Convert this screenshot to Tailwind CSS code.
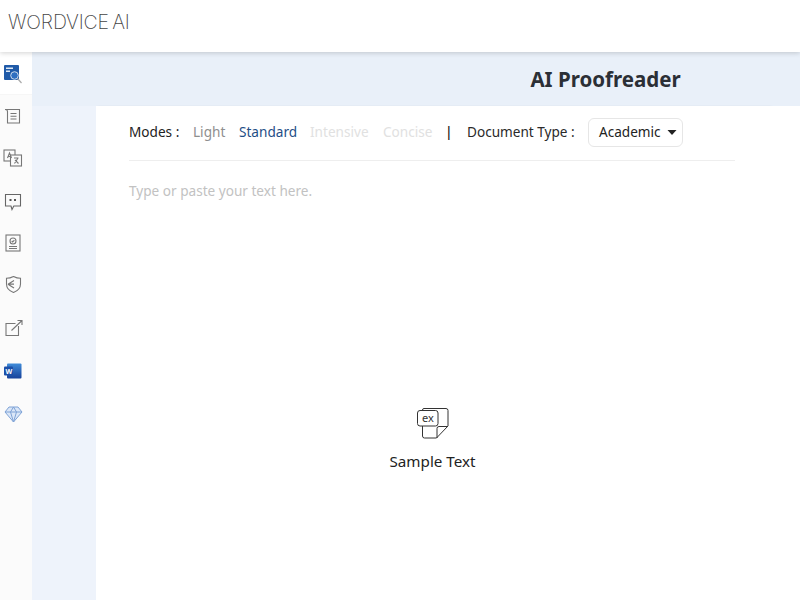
<!DOCTYPE html>
<html><head><meta charset="utf-8">
<script src="https://cdn.jsdelivr.net/npm/@tailwindcss/browser@4"></script>
</head>
<body class="w-[800px] h-[600px] overflow-hidden bg-white font-['Noto_Sans',sans-serif]">
<header class="relative z-10 h-[52px] bg-white shadow-[0_1px_5px_rgba(0,0,0,0.18)] flex items-center pl-[8px]">
  <span class="font-['Inter',sans-serif] font-extralight text-[#444] text-[19.5px] tracking-[-0.15px] [word-spacing:-2px] leading-none pb-[6px]">WORDVICE AI</span>
</header>
<div class="flex h-[548px]">
  <aside class="w-[32px] shrink-0 bg-[#fbfbfb] flex flex-col">
    <div class="h-[43px] bg-white flex items-start pl-[4px] pt-[13px] border-b border-[#f6f6f6]">
      <svg width="18" height="19" viewBox="0 0 18 19"><rect x="0" y="0" width="15" height="15" rx="1" fill="#1f5aa8"/><rect x="2" y="2.500" width="7" height="1.500" fill="#dfe9f5"/><rect x="2" y="5.500" width="4" height="1.500" fill="#dfe9f5"/><circle cx="10.500" cy="10.500" r="3.800" fill="#2f6fc0" stroke="#cfdcec" stroke-width="1"/><path d="M13.500 13.500L17.500 18" stroke="#aaa" stroke-width="1.200"/></svg>
    </div>
    <div class="flex flex-col items-center pr-[6px]">
      <svg width="18" height="18" viewBox="0 0 18 18" class="mt-[12px] ml-[-1px]" fill="none" stroke="#777" stroke-width="1.100"><path d="M1 2.500H15.500V16H3.500V4.500C3.500 3.300 2.200 2.500 1 2.500Z"/><path d="M6.500 6.500H12.500M6.500 9.300H12.500M6.500 12H12.500"/></svg>
      <svg width="20" height="18" viewBox="0 0 20 18" class="mt-[24px]" fill="none" stroke="#777" stroke-width="1.100"><rect x="1" y="1" width="11" height="11" fill="#fbfbfb"/><rect x="7.500" y="6" width="11" height="11" fill="#fbfbfb"/><path d="M4.500 9L6.500 4L8.500 9M5 7.500H8"/><path d="M11 9H15.500M15 9L11.500 14.500M12 11L15.500 14.500"/></svg>
      <svg width="18" height="18" viewBox="0 0 18 18" class="mt-[26px]" fill="none" stroke="#666" stroke-width="1.100"><path d="M1.500 1.500H16.500V13H9.800L8 16.500L7 13H1.500Z"/><path d="M5.500 6H7.500V8H5.500ZM10 6H12V8H10Z" fill="#555" stroke="none"/></svg>
      <svg width="16" height="18" viewBox="0 0 16 18" class="mt-[23px]" fill="none" stroke="#777" stroke-width="1.100"><rect x="1" y="1" width="14" height="16"/><circle cx="8" cy="7" r="3"/><path d="M6.700 7L7.700 8L9.400 6.200M4 12.500H12M4 14.500H12"/></svg>
      <svg width="17" height="19" viewBox="0 0 17 19" class="mt-[23px]" fill="none" stroke="#777" stroke-width="1.100"><path d="M8.500 1.500C11 2.800 13.500 3.300 15.500 3.300V9C15.500 13 12.500 16 8.500 17.500C4.500 16 1.500 13 1.500 9V3.300C3.500 3.300 6 2.800 8.500 1.500Z"/><path d="M3 9.200H9M3 9.200L9 5.500M3 9.200L9 13" stroke-width="1.200"/></svg>
      <svg width="18" height="18" viewBox="0 0 18 18" class="mt-[25px] ml-[1px]" fill="none" stroke="#777" stroke-width="1.100"><path d="M13.500 7V16.500H1V4.500H10.500"/><path d="M6.500 11.500L17 1.500M12.500 1.500H17V6"/></svg>
      <svg width="18" height="16" viewBox="0 0 18 16" class="mt-[26px] ml-[-1px]"><defs><linearGradient id="w" x1="0" y1="0" x2="0" y2="1"><stop offset="0" stop-color="#3f8bd8"/><stop offset="1" stop-color="#17419a"/></linearGradient></defs><rect x="3" y="0.500" width="14.500" height="15" rx="1" fill="url(#w)"/><rect x="0" y="3.500" width="9" height="9" rx="1" fill="#1c4fa8"/><text x="1.500" y="10.500" font-size="7" font-weight="700" fill="#fff" font-family="Noto Sans">W</text></svg>
      <svg width="19" height="17" viewBox="0 0 19 17" class="mt-[27px]" fill="#dbe7f8" stroke="#7fa3d6" stroke-width="1"><path d="M5 1H14L18 6L9.500 16L1 6Z"/><path d="M1 6H18M6.500 6L9.500 16L12.500 6L9.500 1L6.500 6" fill="none"/></svg>
    </div>
  </aside>
  <main class="flex-1 flex flex-col min-w-0">
    <div class="h-[54px] bg-[#e9f0f9] flex items-center justify-center shrink-0 pl-[379px]">
      <h1 class="font-bold text-[20.5px] leading-none text-[#2b2f36] whitespace-nowrap">AI Proofreader</h1>
    </div>
    <div class="flex-1 flex min-h-0">
      <div class="w-[64px] shrink-0 bg-[#eef3fb]"></div>
      <section class="w-[675px] bg-white pl-[33px] pr-[36px] flex flex-col shadow-[1px_0_2px_rgba(0,0,0,0.05)]">
        <div class="h-[55px] pb-[2px] border-b border-[#eeeeee] flex items-center text-[13.6px] whitespace-nowrap shrink-0">
          <span class="text-[#222] w-[64px]">Modes :</span>
          <span class="text-[#8f8f8f] w-[46px]">Light</span>
          <span class="text-[#1f4e86] w-[71px]">Standard</span>
          <span class="text-[#e1e1e1] w-[73px]">Intensive</span>
          <span class="text-[#e1e1e1] w-[64px]">Concise</span>
          <span class="font-['Liberation_Sans',sans-serif] text-[14px] text-[#111] w-[20px]">|</span>
          <span class="text-[#2a2a2a] w-[121px]">Document Type :</span>
          <div class="w-[95px] h-[29px] border border-[#e6e6e6] rounded-[6px] flex items-center pl-[10px] gap-[6px] text-[#222]">
            Academic
            <svg width="10" height="5" viewBox="0 0 10 5"><path d="M0.500 0H9.500L5 5Z" fill="#222"/></svg>
          </div>
        </div>
        <p class="text-[13.6px] text-[#c2c2c2] mt-[20px] leading-[20px]">Type or paste your text here.</p>
        <div class="flex flex-col items-center mt-[207px] pl-[1px]">
          <svg width="32" height="31" viewBox="0 0 32 31" fill="none" stroke="#333" stroke-width="1"><path d="M5.500 2V2Q5.500 .5 7 .5H29Q31 .5 31 2.500V18L19.500 30H7.500Q5.500 30 5.500 28V18"/><path d="M31 18.500H22Q20 18.500 20 20.500V30"/><rect x=".5" y="2.500" width="20.500" height="15.500" rx="2.500" fill="#fff"/><text x="5" y="14" font-size="11" fill="#333" stroke="none" font-family="Noto Sans">ex</text></svg>
          <span class="text-[15.2px] text-[#222] mt-[12px] leading-[20px]">Sample Text</span>
        </div>
      </section>
      <div class="flex-1 bg-white"></div>
    </div>
  </main>
</div>
</body></html>
